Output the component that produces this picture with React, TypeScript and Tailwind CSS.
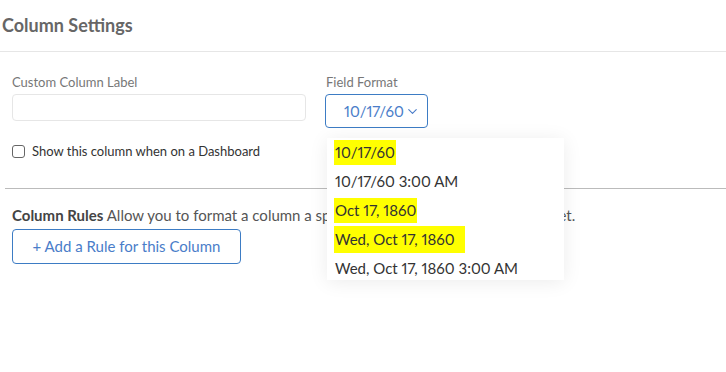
import { ChevronDown } from "lucide-react";

const formats = [
  { label: "10/17/60", mark: true },
  { label: "10/17/60 3:00 AM", mark: false },
  { label: "Oct 17, 1860", mark: true },
  { label: "Wed, Oct 17, 1860", mark: true, wide: true },
  { label: "Wed, Oct 17, 1860 3:00 AM", mark: false },
];

export default function App() {
  return (
    <div className="relative h-[372px] w-[726px] overflow-hidden bg-white font-['Lato',sans-serif] proportional-nums">
      {/* Header */}
      <div className="flex h-[52px] items-center border-b border-[#e6e6e6] pl-[2px]">
        <h2 className="text-[18px] font-bold text-[#666]">Column Settings</h2>
      </div>

      {/* Fields */}
      <div className="flex gap-[19px] px-3 pt-[22px]">
        <div className="w-[294px]">
          <label className="block text-[13px] leading-[16px] text-[#777]">Custom Column Label</label>
          <input className="mt-[4px] h-[27px] w-full rounded-sm border border-[#e6e6e6]" />
          <label className="mt-[21px] flex items-center gap-[7px] text-[13px] text-[#333]">
            <span className="h-[13px] w-[13px] rounded-[3px] border border-[#666]" />
            Show this column when on a Dashboard
          </label>
        </div>
        <div>
          <label className="block pl-px text-[13px] leading-[16px] text-[#777]">Field Format</label>
          <button className="mt-[4px] flex h-[34px] w-[103px] items-center gap-[1px] rounded-sm border border-[#3d7cc4] pl-[18px] text-[15px] text-[#4a7dc9]">
            10/17/60
            <ChevronDown size={15} strokeWidth={1.8} className="mt-px shrink-0" />
          </button>
        </div>
      </div>

      {/* Divider */}
      <div className="ml-[5px] mt-[26px] border-t border-[#bbb]" />

      {/* Column rules */}
      <div className="px-3 pt-[17px]">
        <p className="whitespace-nowrap text-[15px] leading-[18px] text-[#555]">
          <span className="font-bold text-[#444]">Column Rules</span> Allow you to format a column a specific way based on data in the sheet.
        </p>
        <button className="mt-[5px] h-[35px] w-[229px] rounded-sm border border-[#3d7cc4] text-[15px] text-[#4a7dc9]">
          + Add a Rule for this Column
        </button>
      </div>

      {/* Dropdown menu */}
      <div className="absolute left-[327px] top-[138px] h-[142px] w-[237px] bg-white shadow-[0_2px_18px_rgba(0,0,0,0.08)]">
        {formats.map((f) => (
          <div key={f.label} className="flex h-[29px] items-center pl-[7px] text-[15px] text-[#333]">
            <span className={f.mark ? (f.wide ? "bg-[#ffff00] pl-px pr-[10px] py-[2px]" : "bg-[#ffff00] pl-px pr-[1px] py-[1px]") : "pl-px"}>
              {f.label}
            </span>
          </div>
        ))}
      </div>
    </div>
  );
}
